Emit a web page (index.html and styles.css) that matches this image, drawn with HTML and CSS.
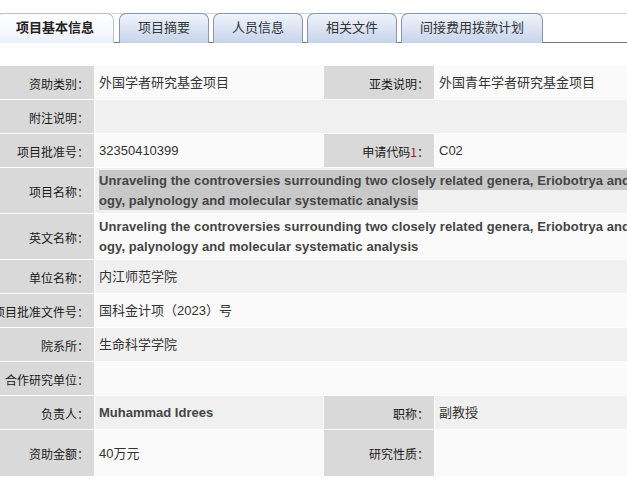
FILE: index.html
```html
<!DOCTYPE html>
<html lang="zh-CN">
<head>
    <meta charset="UTF-8">
    <title>项目基本信息</title>
    <link rel="stylesheet" href="styles.css">
</head>
<body>
    <div class="page">
        <div class="tabs">
            <div class="tab active">项目基本信息</div>
            <div class="tab">项目摘要</div>
            <div class="tab">人员信息</div>
            <div class="tab">相关文件</div>
            <div class="tab">间接费用拨款计划</div>
        </div>

        <table class="info">
            <colgroup>
                <col class="c-label">
                <col class="c-value">
                <col class="c-label2">
                <col>
            </colgroup>
            <tr class="odd">
                <th><span>资助类别：</span></th>
                <td>外国学者研究基金项目</td>
                <th><span>亚类说明：</span></th>
                <td>外国青年学者研究基金项目</td>
            </tr>
            <tr class="even">
                <th><span>附注说明：</span></th>
                <td colspan="3"></td>
            </tr>
            <tr class="odd">
                <th><span>项目批准号：</span></th>
                <td>32350410399</td>
                <th><span>申请代码<em>1</em>：</span></th>
                <td>C02</td>
            </tr>
            <tr class="even">
                <th><span>项目名称：</span></th>
                <td colspan="3" class="title"><span class="mark">Unraveling the controversies surrounding two closely related genera, Eriobotrya and Rhaphiolepis (Rosaceae) based on morphol<br>ogy, palynology and molecular systematic analysis</span></td>
            </tr>
            <tr class="odd">
                <th><span>英文名称：</span></th>
                <td colspan="3" class="title"><span>Unraveling the controversies surrounding two closely related genera, Eriobotrya and Rhaphiolepis (Rosaceae) based on morphol<br>ogy, palynology and molecular systematic analysis</span></td>
            </tr>
            <tr class="even">
                <th><span>单位名称：</span></th>
                <td colspan="3">内江师范学院</td>
            </tr>
            <tr class="odd">
                <th><span>项目批准文件号：</span></th>
                <td colspan="3">国科金计项（2023）号</td>
            </tr>
            <tr class="even">
                <th><span>院系所：</span></th>
                <td colspan="3">生命科学学院</td>
            </tr>
            <tr class="odd">
                <th><span>合作研究单位：</span></th>
                <td colspan="3"></td>
            </tr>
            <tr class="even">
                <th><span>负责人：</span></th>
                <td class="bold">Muhammad Idrees</td>
                <th><span>职称：</span></th>
                <td>副教授</td>
            </tr>
            <tr class="odd tall">
                <th><span>资助金额：</span></th>
                <td>40万元</td>
                <th><span>研究性质：</span></th>
                <td></td>
            </tr>
        </table>
    </div>
</body>
</html>
```

FILE: styles.css
```css
* {
    margin: 0;
    padding: 0;
    box-sizing: border-box;
}
html, body {
    background: #fff;
    overflow: hidden;
}
body {
    font-family: "Liberation Sans", Arial, "Noto Sans CJK SC", sans-serif;
    font-size: 13px;
    color: #333;
}
.page {
    width: 1000px;
    padding-top: 13px;
}

/* tabs */
.tabs {
    display: flex;
    margin-left: -4px;
    height: 30px;
    border-top: 1px solid #d4d4d4;
    border-bottom: 1px solid #6f7c8e;
}
.tab {
    height: 30px;
    margin-top: -1px;
    margin-right: 4px;
    padding: 0 18px;
    line-height: 28px;
    font-size: 13px;
    color: #333;
    border: 1px solid #8797b0;
    border-bottom: none;
    border-radius: 7px 7px 0 0;
    background: linear-gradient(#f0f4fb, #dbe4f3 50%, #c6d3ea);
    white-space: nowrap;
}
.tab.active {
    margin-right: 5px;
    padding: 0 19px;
    font-weight: bold;
    color: #222;
    border-color: #b8c2d2;
    background: linear-gradient(#ffffff, #f6f8fc 60%, #e9eef7);
}

/* info table */
.info {
    margin-top: 22px;
    margin-left: -1px;
    width: 1000px;
    border-collapse: separate;
    border-spacing: 1px;
    table-layout: fixed;
}
.c-label { width: 94px; }
.c-value { width: 228px; }
.c-label2 { width: 110px; }
.info tr { height: 33px; }
.info tr.tall { height: 46px; }
.info th {
    background: #d9d9d9;
    font-weight: normal;
    font-size: 12px;
    color: #1a1a1a;
    font-family: "Noto Sans CJK SC", sans-serif;
    padding: 1px 5px 0 0;
    vertical-align: middle;
}
.info th span {
    display: flex;
    justify-content: flex-end;
    white-space: nowrap;
}
.info th em {
    font-style: normal;
    color: #a01818;
}
.info td {
    padding: 3px 4px 2px;
    line-height: 20px;
    vertical-align: middle;
    white-space: nowrap;
    overflow: hidden;
}
.info tr.odd td { background: #fafafa; }
.info tr.even td { background: #f0f0f0; }
.info td.title,
.info td.bold {
    font-weight: bold;
    color: #444;
}
.info td.title {
    letter-spacing: 0.08px;
}
.mark {
    background: #c8c8c8;
    padding: 3px 0 2px;
    -webkit-box-decoration-break: clone;
    box-decoration-break: clone;
}
```
